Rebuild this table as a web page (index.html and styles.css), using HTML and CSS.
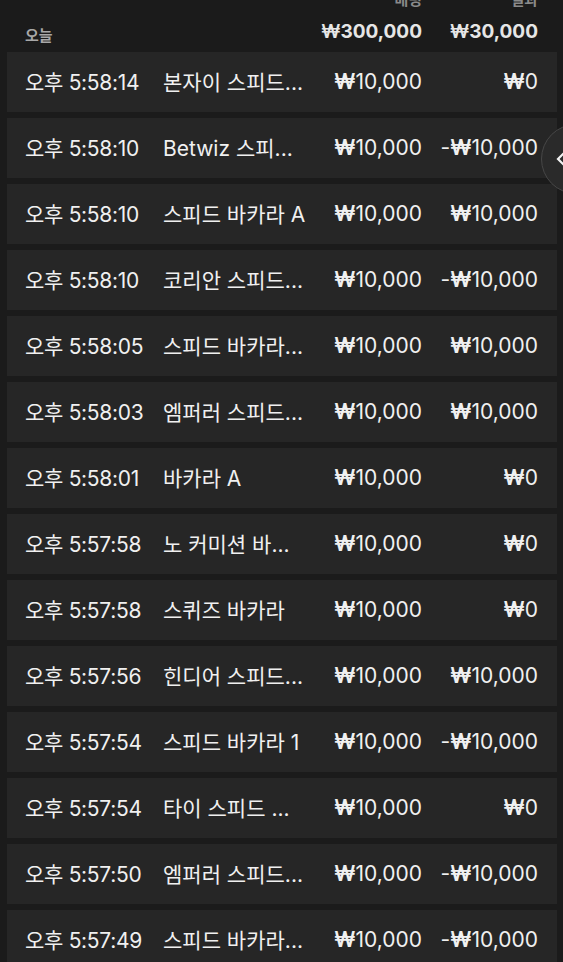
FILE: index.html
```html
<!DOCTYPE html>
<html lang="ko">
<head>
  <meta charset="UTF-8" />
  <meta name="viewport" content="width=device-width, initial-scale=1.0" />
  <title>배팅 내역</title>
  <link rel="stylesheet" href="styles.css">
</head>

<body>
  <div class="history">
    <div class="labels">
      <span class="col-bet">배팅</span>
      <span class="col-result">결과</span>
    </div>

    <div class="day">
      <span class="day-name">오늘</span>
      <span class="col-bet total"><span class="won">₩</span>300,000</span>
      <span class="col-result total"><span class="won">₩</span>30,000</span>
    </div>

    <ul class="rows">
      <li class="row"><span class="time">오후 5:58:14</span><span class="game">본자이 스피드...</span><span class="col-bet"><span class="won">₩</span>10,000</span><span class="col-result"><span class="won">₩</span>0</span></li>
      <li class="row"><span class="time">오후 5:58:10</span><span class="game">Betwiz 스피...</span><span class="col-bet"><span class="won">₩</span>10,000</span><span class="col-result">-<span class="won">₩</span>10,000</span></li>
      <li class="row"><span class="time">오후 5:58:10</span><span class="game">스피드 바카라 A</span><span class="col-bet"><span class="won">₩</span>10,000</span><span class="col-result"><span class="won">₩</span>10,000</span></li>
      <li class="row"><span class="time">오후 5:58:10</span><span class="game">코리안 스피드...</span><span class="col-bet"><span class="won">₩</span>10,000</span><span class="col-result">-<span class="won">₩</span>10,000</span></li>
      <li class="row"><span class="time">오후 5:58:05</span><span class="game">스피드 바카라...</span><span class="col-bet"><span class="won">₩</span>10,000</span><span class="col-result"><span class="won">₩</span>10,000</span></li>
      <li class="row"><span class="time">오후 5:58:03</span><span class="game">엠퍼러 스피드...</span><span class="col-bet"><span class="won">₩</span>10,000</span><span class="col-result"><span class="won">₩</span>10,000</span></li>
      <li class="row"><span class="time">오후 5:58:01</span><span class="game">바카라 A</span><span class="col-bet"><span class="won">₩</span>10,000</span><span class="col-result"><span class="won">₩</span>0</span></li>
      <li class="row"><span class="time">오후 5:57:58</span><span class="game">노 커미션 바...</span><span class="col-bet"><span class="won">₩</span>10,000</span><span class="col-result"><span class="won">₩</span>0</span></li>
      <li class="row"><span class="time">오후 5:57:58</span><span class="game">스퀴즈 바카라</span><span class="col-bet"><span class="won">₩</span>10,000</span><span class="col-result"><span class="won">₩</span>0</span></li>
      <li class="row"><span class="time">오후 5:57:56</span><span class="game">힌디어 스피드...</span><span class="col-bet"><span class="won">₩</span>10,000</span><span class="col-result"><span class="won">₩</span>10,000</span></li>
      <li class="row"><span class="time">오후 5:57:54</span><span class="game">스피드 바카라 1</span><span class="col-bet"><span class="won">₩</span>10,000</span><span class="col-result">-<span class="won">₩</span>10,000</span></li>
      <li class="row"><span class="time">오후 5:57:54</span><span class="game">타이 스피드 ...</span><span class="col-bet"><span class="won">₩</span>10,000</span><span class="col-result"><span class="won">₩</span>0</span></li>
      <li class="row"><span class="time">오후 5:57:50</span><span class="game">엠퍼러 스피드...</span><span class="col-bet"><span class="won">₩</span>10,000</span><span class="col-result">-<span class="won">₩</span>10,000</span></li>
      <li class="row"><span class="time">오후 5:57:49</span><span class="game">스피드 바카라...</span><span class="col-bet"><span class="won">₩</span>10,000</span><span class="col-result">-<span class="won">₩</span>10,000</span></li>
    </ul>
  </div>

  <button class="collapse" aria-label="닫기">
    <svg width="14" height="22" viewBox="0 0 14 22"><path d="M12 2 L3 11 L12 20" fill="none" stroke="#f2f2f2" stroke-width="2.2"/></svg>
  </button>
</body>
</html>
```

FILE: styles.css
```css
:root {
  --bg: #1b1b1b;
  --row: #262626;
  --text: #f0f0f0;
  --muted: #8a8a8a;
}

* {
  box-sizing: border-box;
}

body {
  margin: 0;
  background: var(--bg);
  color: var(--text);
  font-family: Inter, "Noto Sans CJK KR", sans-serif;
  overflow: hidden;
  height: 100vh;
  position: relative;
}

.history {
  padding: 0 6px 0 7px;
  margin-top: -12px;
}

.labels,
.day,
.row {
  display: flex;
  align-items: center;
  padding: 0 19px 0 18px;
}

.labels {
  height: 20px;
  font-size: 15px;
  font-weight: 600;
  color: var(--muted);
}

.labels .col-bet {
  margin-left: auto;
}

.day {
  height: 44px;
}

.day-name {
  font-size: 15px;
  font-weight: 700;
  color: #a8a8a8;
  margin-top: 8px;
  margin-right: auto;
}

.total {
  font-size: 19px;
  font-weight: 700;
  color: #e6e6e6;
  margin-top: 2px;
}

.won {
  font-weight: 600;
}

.col-bet {
  text-align: right;
}

.col-result {
  width: 116px;
  text-align: right;
}

.rows {
  list-style: none;
  margin: 0;
  padding: 0;
  display: flex;
  flex-direction: column;
  gap: 6px;
}

.row {
  height: 60px;
  background: var(--row);
  font-size: 21px;
  padding-bottom: 2px;
}

.time {
  width: 138px;
  flex-shrink: 0;
  letter-spacing: -0.3px;
}

.game {
  flex: 1;
  white-space: nowrap;
  overflow: hidden;
}

.collapse {
  position: absolute;
  left: 541px;
  top: 124px;
  width: 70px;
  height: 70px;
  border-radius: 50%;
  background: #2a2a2a;
  border: 1px solid #474747;
  padding: 0 0 0 13px;
  display: flex;
  align-items: center;
  cursor: pointer;
}
```
